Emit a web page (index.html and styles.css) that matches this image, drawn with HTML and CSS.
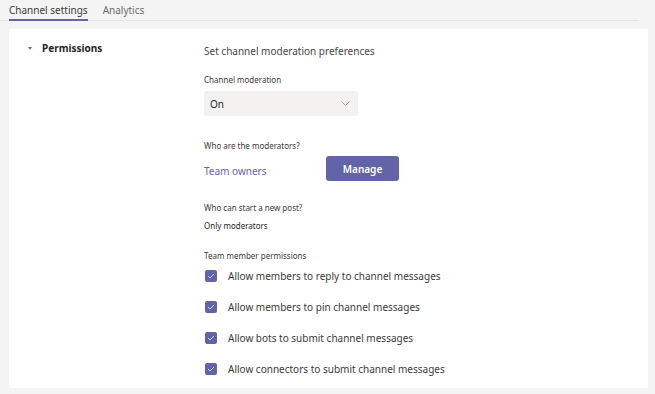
FILE: index.html
```html
<!DOCTYPE html>
<html>
<head>
<meta charset="utf-8">
<link rel="stylesheet" href="styles.css">
</head>
<body>
<div class="tabs">
  <div class="tab active">Channel settings</div>
  <div class="tab">Analytics</div>
</div>
<div class="card">
  <div class="side">
    <span class="caret"></span>
    <span class="side-title">Permissions</span>
  </div>
  <div class="main">
    <div class="heading">Set channel moderation preferences</div>
    <div class="label l-mod">Channel moderation</div>
    <div class="select">
      <span>On</span>
      <svg class="chev" width="9" height="5" viewBox="0 0 9 5"><path d="M0.5 0.5 L4.5 4.5 L8.5 0.5" fill="none" stroke="#9a9a9a" stroke-width="0.9"/></svg>
    </div>
    <div class="label l-who">Who are the moderators?</div>
    <div class="row-mod">
      <span class="link">Team owners</span>
      <button class="btn">Manage</button>
    </div>
    <div class="label l-post">Who can start a new post?</div>
    <div class="value">Only moderators</div>
    <div class="label l-perm">Team member permissions</div>
    <div class="checks">
      <div class="check"><span class="box"><svg width="8" height="6" viewBox="0 0 8 6"><path d="M1 3 L3 5 L7 1" fill="none" stroke="#c9c9e8" stroke-width="1"/></svg></span>Allow members to reply to channel messages</div>
      <div class="check"><span class="box"><svg width="8" height="6" viewBox="0 0 8 6"><path d="M1 3 L3 5 L7 1" fill="none" stroke="#c9c9e8" stroke-width="1"/></svg></span>Allow members to pin channel messages</div>
      <div class="check"><span class="box"><svg width="8" height="6" viewBox="0 0 8 6"><path d="M1 3 L3 5 L7 1" fill="none" stroke="#c9c9e8" stroke-width="1"/></svg></span>Allow bots to submit channel messages</div>
      <div class="check"><span class="box"><svg width="8" height="6" viewBox="0 0 8 6"><path d="M1 3 L3 5 L7 1" fill="none" stroke="#c9c9e8" stroke-width="1"/></svg></span>Allow connectors to submit channel messages</div>
    </div>
  </div>
</div>
</body>
</html>
```
FILE: styles.css
```css
html, body {
  margin: 0;
  padding: 0;
  background: #f4f4f4;
  font-family: "Noto Sans", "Open Sans", sans-serif;
  color: #252423;
}
.tabs {
  display: flex;
  gap: 15px;
  width: 639px;
  padding-left: 9px;
  height: 21px;
  border-bottom: 1px solid #e6e6e6;
  box-sizing: border-box;
}
.tab {
  font-size: 10px;
  line-height: 14px;
  padding-top: 3px;
  color: #6e6c6a;
  height: 21px;
  box-sizing: border-box;
}
.tab.active {
  color: #3b3a39;
  border-bottom: 2px solid #6264a7;
}
.card {
  margin: 8px 0 0 9px;
  width: 639px;
  height: 359px;
  background: #fff;
  border-radius: 2px;
  display: flex;
  box-sizing: border-box;
}
.side {
  width: 195px;
  padding: 12px 0 0 19px;
  box-sizing: border-box;
  display: flex;
  align-items: flex-start;
  gap: 10px;
}
.caret {
  width: 0;
  height: 0;
  border-left: 2.5px solid transparent;
  border-right: 2.5px solid transparent;
  border-top: 3px solid #6e6e6e;
  margin-top: 6px;
}
.side-title {
  font-size: 10px;
  font-weight: 700;
  line-height: 14px;
}
.main {
  padding-top: 15px;
  display: flex;
  flex-direction: column;
}
.heading {
  font-size: 10px;
  line-height: 14px;
  color: #484644;
}
.label {
  font-size: 8px;
  line-height: 12px;
  color: #3b3a39;
}
.l-mod { margin-top: 16px; }
.select {
  margin-top: 5px;
  width: 154px;
  height: 25px;
  background: #f3f2f1;
  border-radius: 3px;
  display: flex;
  align-items: center;
  justify-content: space-between;
  padding: 0 8px 0 6px;
  box-sizing: border-box;
  font-size: 10px;
  color: #252423;
}
.l-who { margin-top: 24px; }
.row-mod {
  display: flex;
  align-items: center;
  margin-top: 4px;
  height: 25px;
}
.link {
  font-size: 10px;
  color: #6264a7;
  width: 122px;
  padding-top: 5px;
}
.btn {
  width: 73px;
  height: 25px;
  border: none;
  border-radius: 3px;
  background: #6264a7;
  color: #fff;
  font-family: inherit;
  font-size: 10px;
  font-weight: 600;
  padding: 0;
}
.l-post { margin-top: 21px; }
.value {
  margin-top: 6px;
  font-size: 8px;
  line-height: 12px;
  color: #252423;
}
.l-perm { margin-top: 18px; }
.checks {
  display: flex;
  flex-direction: column;
  gap: 17px;
  margin-top: 7px;
}
.check {
  display: flex;
  align-items: center;
  font-size: 10px;
  line-height: 14px;
  color: #3b3a39;
  padding-left: 1px;
}
.box {
  width: 12px;
  height: 12px;
  background: #6264a7;
  border-radius: 2px;
  display: flex;
  align-items: center;
  justify-content: center;
  margin-right: 11px;
}
```
